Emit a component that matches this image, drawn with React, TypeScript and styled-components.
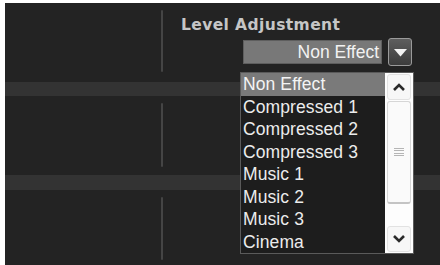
import { FC } from 'react';
import styled, { createGlobalStyle } from 'styled-components';

const GlobalStyle = createGlobalStyle`
  html, body {
    margin: 0;
    padding: 0;
    background: #fff;
    overflow: hidden;
  }
`;

const Page = styled.div`
  padding: 3px 0 0 5px;
  width: 440px;
  height: 265px;
  box-sizing: border-box;
`;

const Frame = styled.div`
  height: 262px;
  background: #232323;
  display: grid;
  grid-template-rows: 79px 14px 79px 15px 1fr;
  font-family: 'Liberation Sans', Arial, sans-serif;
`;

const Band = styled.div`
  background: #333333;
`;

const Row = styled.div<{ $top: number; $bottom: number; $front?: boolean }>`
  display: flex;
  min-height: 0;
  padding: ${p => p.$top}px 0 ${p => p.$bottom}px;
  position: relative;
  z-index: ${p => (p.$front ? 2 : 1)};
`;

const LeftCell = styled.div`
  width: 156px;
`;

const Divider = styled.div`
  width: 2px;
  background: #454545;
  border-radius: 1px;
`;

const RightCell = styled.div`
  flex: 1;
  padding-left: 18px;
  position: relative;
`;

const Title = styled.div`
  font-family: 'DejaVu Sans', Verdana, sans-serif;
  font-weight: bold;
  font-size: 15.5px;
  letter-spacing: 0.4px;
  color: #c6c6c6;
  line-height: 18px;
  margin-top: 6px;
`;

const Combo = styled.div`
  position: relative;
  display: flex;
  align-items: center;
  gap: 6px;
  margin: 4px 0 0 62px;
  width: 169px;
`;

const Field = styled.div`
  width: 139px;
  height: 24px;
  box-sizing: border-box;
  background: #787878;
  border: 1px solid #5e5e5e;
  color: #f2f2f2;
  font-size: 17.5px;
  line-height: 22px;
  text-align: right;
  padding-right: 2px;
`;

const DropButton = styled.div`
  width: 24px;
  height: 28px;
  box-sizing: border-box;
  border-radius: 3px;
  border: 1px solid #9a9a9a;
  background: linear-gradient(#5e5e5e, #3c3c3c);
  display: flex;
  align-items: center;
  justify-content: center;
`;

const ListBox = styled.div`
  position: absolute;
  left: -3px;
  top: 34px;
  width: 174px;
  height: 182px;
  box-sizing: border-box;
  border: 1px solid #5a5a5a;
  background: #1d1d1d;
  display: flex;
`;

const Items = styled.div`
  flex: 1;
  display: flex;
  flex-direction: column;
`;

const Item = styled.div<{ $active?: boolean }>`
  height: 22.5px;
  line-height: 23px;
  font-size: 17.5px;
  letter-spacing: 0.1px;
  padding-left: 2px;
  color: ${p => (p.$active ? '#f4f4f4' : '#ececec')};
  background: ${p => (p.$active ? '#7a7a7a' : 'transparent')};
  white-space: nowrap;
`;

const ScrollBar = styled.div`
  width: 28px;
  background: #fdfdfd;
  display: flex;
  flex-direction: column;
  padding: 1px 2px;
  box-sizing: border-box;
  gap: 1px;
`;

const ArrowButton = styled.div`
  height: 24px;
  border: 1px solid #e2e2e2;
  border-radius: 3px;
  background: #f7f7f7;
  display: flex;
  align-items: center;
  justify-content: center;
`;

const Track = styled.div`
  flex: 1;
  display: flex;
  flex-direction: column;
`;

const Thumb = styled.div`
  height: 100px;
  border: 1px solid #d6d6d6;
  border-bottom: 2px solid #c4c4c4;
  border-radius: 3px;
  background: #fafafa;
  display: flex;
  align-items: center;
  justify-content: center;
`;

const Grip = styled.div`
  width: 10px;
  height: 8px;
  background: repeating-linear-gradient(#b5b5b5 0 1px, transparent 1px 2.5px);
`;

const Chevron: FC<{ up?: boolean }> = ({ up }) => (
  <svg width="14" height="10" viewBox="0 0 14 10">
    <path
      d={up ? 'M2 8 L7 3 L12 8' : 'M2 2 L7 7 L12 2'}
      fill="none"
      stroke="#2a2a2a"
      strokeWidth="2.6"
    />
  </svg>
);

const items = [
  'Non Effect',
  'Compressed 1',
  'Compressed 2',
  'Compressed 3',
  'Music 1',
  'Music 2',
  'Music 3',
  'Cinema',
];

const App: FC = () => (
  <Page>
    <GlobalStyle />
    <Frame>
      <Row $top={7} $bottom={10} $front>
        <LeftCell />
        <Divider />
        <RightCell>
          <Title>Level Adjustment</Title>
          <Combo>
            <Field>Non Effect</Field>
            <DropButton>
              <svg width="15" height="9" viewBox="0 0 15 9">
                <path d="M1 1 H14 L7.5 8.5 Z" fill="#f4f4f4" />
              </svg>
            </DropButton>
            <ListBox>
              <Items>
                {items.map((it, i) => (
                  <Item key={it} $active={i === 0}>
                    {it}
                  </Item>
                ))}
              </Items>
              <ScrollBar>
                <ArrowButton>
                  <Chevron up />
                </ArrowButton>
                <Track>
                  <Thumb>
                    <Grip />
                  </Thumb>
                </Track>
                <ArrowButton>
                  <Chevron />
                </ArrowButton>
              </ScrollBar>
            </ListBox>
          </Combo>
        </RightCell>
      </Row>
      <Band />
      <Row $top={7} $bottom={8}>
        <LeftCell />
        <Divider />
        <RightCell />
      </Row>
      <Band />
      <Row $top={7} $bottom={5}>
        <LeftCell />
        <Divider />
        <RightCell />
      </Row>
    </Frame>
  </Page>
);

export default App;
